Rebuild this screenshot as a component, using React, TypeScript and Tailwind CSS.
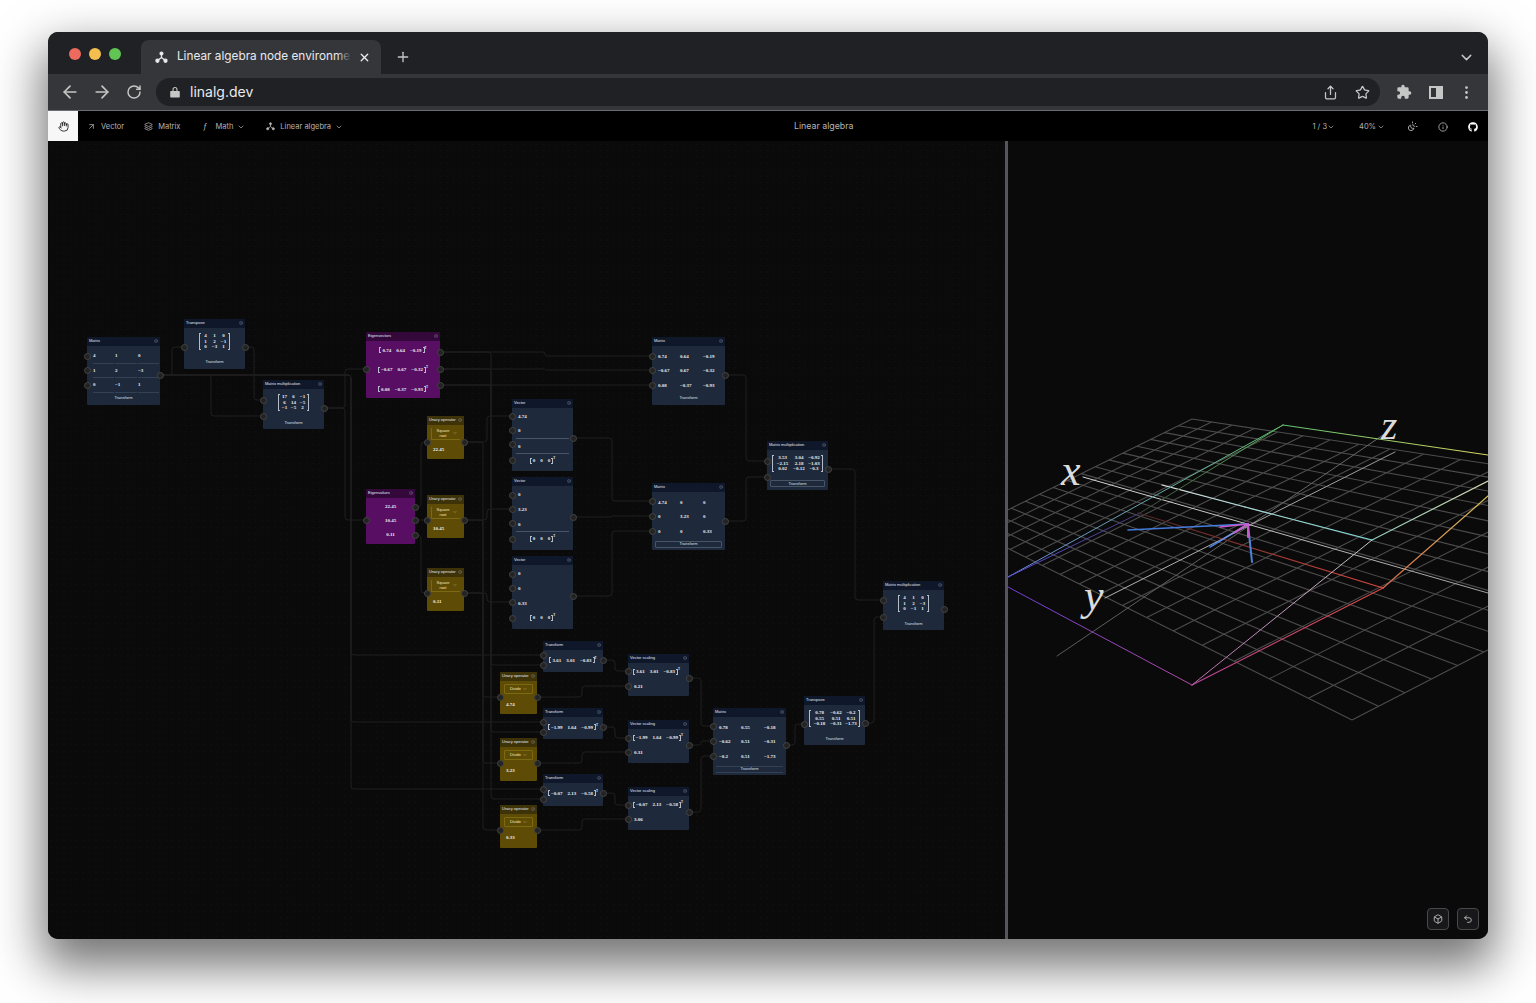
import React from "react";
import {
  ArrowLeft, ArrowRight, ArrowUpRight, Box, ChevronDown, CircleX, EllipsisVertical, Hand, Info, Layers, Plus,
  RotateCw, Share, Star, SunMoon, Undo2, X,
} from "lucide-react";
import { FaGithub } from "react-icons/fa";

/* ---------- small icons ---------- */
function NodesIcon({ size = 12, color = "currentColor" }: { size?: number; color?: string }) {
  return (
    <svg width={size} height={size} viewBox="0 0 16 16" fill="none" stroke={color} strokeWidth="1.5">
      <path d="M8 3v5M8 8l-4.5 3.5M8 8l4.5 3.5" />
      <circle cx="8" cy="3" r="1.8" fill={color} />
      <circle cx="3" cy="12" r="1.9" fill={color} />
      <circle cx="13" cy="12" r="1.9" fill={color} />
    </svg>
  );
}
function PuzzleFilled() {
  return (
    <svg width="16" height="16" viewBox="0 0 24 24" fill="#c4c7c5">
      <path d="M20.5 11H19V7a2 2 0 0 0-2-2h-4V3.5a2.5 2.5 0 0 0-5 0V5H4a2 2 0 0 0-2 2v3.8h1.5a2.7 2.7 0 0 1 0 5.4H2V20a2 2 0 0 0 2 2h3.8v-1.5a2.7 2.7 0 0 1 5.4 0V22H17a2 2 0 0 0 2-2v-4h1.5a2.5 2.5 0 0 0 0-5z" />
    </svg>
  );
}

/* ---------- graph nodes ---------- */
type Port = [number, "l" | "r"];
const TONES = {
  slate: { body: "bg-[#1e293b]", head: "bg-[#0f172a]" },
  purple: { body: "bg-[#570e63]", head: "bg-[#35083c]" },
  yellow: { body: "bg-[#5e4b05]", head: "bg-[#3d3208]" },
};
function GraphNode(p: {
  x: number; y: number; w: number; h: number; title: string; tone?: keyof typeof TONES; ports: Port[]; children: React.ReactNode;
}) {
  const tone = TONES[p.tone ?? "slate"];
  return (
    <div className={`absolute rounded-[1px] ${tone.body}`} style={{ left: p.x - 48, top: p.y - 141, width: p.w, height: p.h }}>
      <div className={`flex h-[8.5px] items-center justify-between whitespace-nowrap px-[2px] font-['Liberation_Sans',sans-serif] text-[4px] leading-none text-[#e2e8f0] ${tone.head}`}>
        <span>{p.title}</span>
        <CircleX size={4} strokeWidth={2} className="shrink-0 text-[#7c8798]" />
      </div>
      {p.children}
      {p.ports.map(([py, side], i) => (
        <span
          key={i}
          className={`absolute h-[7px] w-[7px] rounded-full border border-[#444444] bg-[#232323] ${side === "l" ? "left-[-3.5px]" : "right-[-3.5px]"}`}
          style={{ top: py - p.y - 3.5 }}
        />
      ))}
    </div>
  );
}
const serif = "font-['Liberation_Serif',serif] text-[5px] font-bold leading-none text-[#e8edf3]";

function Transform({ border = false, double = false }: { border?: boolean; double?: boolean }) {
  return (
    <div
      className={`mx-[3px] flex h-[7px] items-center justify-center font-['Liberation_Sans',sans-serif] text-[4px] leading-none text-[#dbe2ea] ${border ? "rounded-[1px] border border-[#475569]" : ""} ${double ? "border-y border-[#334155]" : ""}`}
    >
      Transform
    </div>
  );
}
function MatrixNodeBody({ rows, cells = false, border = false, double = false }: { rows: string[][]; cells?: boolean; border?: boolean; double?: boolean }) {
  return (
    <div className="pt-[3.5px]">
      {rows.map((r, i) => (
        <div key={i} className={`grid h-[14.6px] grid-cols-[22px_23px_1fr] items-center pl-[6px] ${serif}`}>
          {r.map((c, j) => (
            <span key={j} className={`flex h-full items-center ${cells ? "mr-[1px] border-b border-[#334155]" : ""}`}>{c}</span>
          ))}
        </div>
      ))}
      <div className="mt-[2px]"><Transform border={border} double={double} /></div>
    </div>
  );
}
function Bracket({ side, h }: { side: "l" | "r"; h: string }) {
  return <span className={`w-[2px] shrink-0 border-y border-[#b4bcc7] ${h} ${side === "l" ? "border-l" : "border-r"}`} />;
}
function MiniMatrix({ rows, wide = false }: { rows: string[][]; wide?: boolean }) {
  return (
    <div className="flex items-center justify-center">
      <Bracket side="l" h="h-[17px]" />
      <div className={`grid ${wide ? "w-[47px] grid-cols-[17px_16px_14px]" : "w-[27px] grid-cols-3"} ${serif} text-center`}>
        {rows.flat().map((c, i) => (
          <span key={i} className="flex h-[5.6px] items-center justify-center">{c}</span>
        ))}
      </div>
      <Bracket side="r" h="h-[17px]" />
    </div>
  );
}
function Vec({ v }: { v: string[] }) {
  return (
    <div className={`flex items-center ${serif}`}>
      <Bracket side="l" h="h-[6px]" />
      <div className="flex gap-[5px] px-[1px]">{v.map((s, i) => <span key={i}>{s}</span>)}</div>
      <Bracket side="r" h="h-[6px]" />
      <span className="mb-[4px] text-[3px]">T</span>
    </div>
  );
}
function MMBody({ rows, border = false, wide = false }: { rows: string[][]; border?: boolean; wide?: boolean }) {
  return (
    <div className="pt-[5px]">
      <MiniMatrix rows={rows} wide={wide} />
      <div className="mt-[8.5px]"><Transform border={border} /></div>
    </div>
  );
}
function VectorBody({ vals, line }: { vals: string[]; line: number[] }) {
  return (
    <div className="pt-[1px]">
      {vals.map((v, i) => (
        <div key={i} className={`mx-[4px] flex h-[15.3px] items-center pl-[2px] ${serif} ${line.includes(i) ? "border-b border-[#475569]" : ""}`}>{v}</div>
      ))}
      <div className="flex h-[13px] items-center justify-center"><Vec v={["0", "0", "0"]} /></div>
    </div>
  );
}
function UnarySqrt({ v }: { v: string }) {
  return (
    <div>
      <div className="mx-[4px] mt-[3px] flex h-[12px] items-center border-b border-l border-[#7c6a12] font-['Liberation_Sans',sans-serif] text-[4px] leading-[5px] text-[#efe6b8]">
        <span className="ml-[2px] w-[18px] text-center">Square root</span>
        <ChevronDown size={4} className="ml-[1px]" />
      </div>
      <div className={`mt-[7px] pl-[6px] ${serif}`}>{v}</div>
    </div>
  );
}
function UnaryDivide({ v }: { v: string }) {
  return (
    <div>
      <div className="mx-[4px] mt-[3px] flex h-[10px] items-center justify-center gap-[2px] rounded-[1px] border border-[#7c6a12] font-['Liberation_Sans',sans-serif] text-[4px] text-[#efe6b8]">
        Divide <ChevronDown size={4} />
      </div>
      <div className={`mt-[8px] pl-[6px] ${serif}`}>{v}</div>
    </div>
  );
}
function TransformBody({ v }: { v: string[] }) {
  return <div className="flex h-[21px] items-center justify-center"><Vec v={v} /></div>;
}
function ScalingBody({ v, s }: { v: string[]; s: string }) {
  return (
    <div className="pl-[5px]">
      <div className="flex h-[18px] items-center"><Vec v={v} /></div>
      <div className={`mt-[3px] pl-[1px] ${serif}`}>{s}</div>
    </div>
  );
}
function Stack({ vals }: { vals: string[] }) {
  return (
    <div className="pt-[2px]">
      {vals.map((v, i) => (
        <div key={i} className={`flex h-[14.2px] items-center justify-center ${serif}`}>{v}</div>
      ))}
    </div>
  );
}

/* ---------- edges ---------- */
function step(x1: number, y1: number, mx: number, x2: number, y2: number, r = 3) {
  if (y1 === y2) return `M${x1} ${y1}H${x2}`;
  const d = y2 > y1 ? 1 : -1;
  const rr = Math.min(r, Math.abs(y2 - y1) / 2);
  return `M${x1} ${y1}H${mx - rr}Q${mx} ${y1} ${mx} ${y1 + d * rr}V${y2 - d * rr}Q${mx} ${y2} ${mx + rr} ${y2}H${x2}`;
}
const EDGES: string[] = [
  step(160, 375, 172, 184, 347),
  step(160, 375, 211, 263, 416),
  step(245, 347, 254, 263, 400),
  step(324, 408, 345, 366, 369),
  step(324, 408, 345, 366, 520),
  step(160, 375, 351, 543, 655),
  step(160, 375, 351, 543, 722),
  step(160, 375, 351, 543, 789),
  step(440, 352, 545, 652, 356),
  step(440, 369, 545, 652, 370),
  step(440, 385, 545, 652, 385),
  step(440, 352, 491, 543, 665),
  step(440, 369, 491, 543, 732),
  step(440, 385, 491, 543, 799),
  step(464, 442, 487, 512, 416),
  step(464, 442, 483, 500, 697),
  step(464, 520, 483, 500, 763),
  step(464, 593, 483, 500, 830),
  step(415, 507, 421, 427, 442),
  step(415, 520, 421, 427, 520),
  step(415, 535, 421, 427, 593),
  step(464, 520, 487, 512, 509),
  step(464, 593, 487, 512, 602),
  step(573, 438, 612, 652, 501),
  step(573, 517, 612, 652, 516),
  step(573, 596, 612, 652, 531),
  step(725, 375, 746, 767, 461),
  step(725, 521, 746, 767, 477),
  step(828, 469, 855, 883, 600),
  step(865, 723, 874, 883, 617),
  step(603, 660, 615, 628, 671),
  step(603, 727, 615, 628, 738),
  step(603, 793, 615, 628, 805),
  step(537, 697, 582, 628, 686),
  step(537, 763, 582, 628, 752),
  step(537, 830, 582, 628, 819),
  step(689, 678, 701, 713, 726),
  step(689, 745, 701, 713, 741),
  step(689, 812, 701, 713, 756),
  step(786, 745, 795, 804, 724),
];

/* ---------- 3D view ---------- */
type Pt = [number, number];
function homography(p00: Pt, p10: Pt, p11: Pt, p01: Pt) {
  const dx1 = p10[0] - p11[0], dx2 = p01[0] - p11[0], sx = p00[0] - p10[0] + p11[0] - p01[0];
  const dy1 = p10[1] - p11[1], dy2 = p01[1] - p11[1], sy = p00[1] - p10[1] + p11[1] - p01[1];
  const det = dx1 * dy2 - dx2 * dy1;
  const g = (sx * dy2 - dx2 * sy) / det, h = (dx1 * sy - sx * dy1) / det;
  const a = p10[0] - p00[0] + g * p10[0], b = p01[0] - p00[0] + h * p01[0], c = p00[0];
  const d = p10[1] - p00[1] + g * p10[1], e = p01[1] - p00[1] + h * p01[1], f = p00[1];
  return (u: number, v: number): Pt => {
    const w = g * u + h * v + 1;
    return [(a * u + b * v + c) / w, (d * u + e * v + f) / w];
  };
}
const H = homography([1192, 419], [1767, 506], [1352, 720], [969, 529]);
const N = 16;
const gridPath = (() => {
  let s = "";
  for (let i = 0; i <= N; i++) {
    const a = H(i / N, 0), b = H(i / N, 1), c = H(0, i / N), d = H(1, i / N);
    s += `M${a[0].toFixed(1)} ${a[1].toFixed(1)}L${b[0].toFixed(1)} ${b[1].toFixed(1)}`;
    s += `M${c[0].toFixed(1)} ${c[1].toFixed(1)}L${d[0].toFixed(1)} ${d[1].toFixed(1)}`;
  }
  return s;
})();
type Seg = [number, number, number, number, string, string, number?];
const SEGS: Seg[] = [
  [1057, 656, 1383, 435, "#5a5a5a", "#6a6a6a", 1],
  [1083, 477, 1488, 593, "#d8d8d8", "#a0a0a0", 1],
  [1105, 598, 1395, 452, "#b5b5b5", "#9a9a9a", 1],
  [1008, 587, 1192, 685, "#6d3fd0", "#b04aa8", 1],
  [1192, 685, 1383, 588, "#b8459a", "#d9483f", 1.2],
  [1383, 588, 1488, 496, "#d9684a", "#d9c25a", 1.2],
  [1383, 588, 1138, 513, "#d9483f", "#4a2424", 1.2],
  [1192, 685, 1372, 540, "#b86ab0", "#c8c8c8", 1],
  [1372, 540, 1488, 481, "#8fc9b8", "#d4d8b0", 1.2],
  [1372, 540, 1245, 507, "#7fe0dc", "#a8d8d8", 1.2],
  [1245, 507, 1162, 485, "#a8d8d8", "#e8e8e8", 1.2],
  [1008, 577, 1283, 425, "#6a8ae0", "#5fc070", 1],
  [1008, 577, 1140, 513, "#5a50e0", "#43397a", 1],
  [1140, 513, 1283, 425, "#3a4a3a", "#5fb060", 1],
  [1283, 425, 1488, 455, "#5fc070", "#d8d860", 1.2],
  [1248, 524, 1128, 530, "#4a80e0", "#3f78d8", 1.6],
  [1248, 524, 1210, 547, "#a8a8e8", "#3f78d8", 1.6],
  [1248, 524, 1252, 562, "#5a8ae0", "#4a82d8", 2],
  [1248, 524, 1220, 527, "#c85ad0", "#c85ad0", 1.6],
  [1248, 524, 1234, 533, "#c85ad0", "#c85ad0", 1.6],
  [1248, 524, 1248, 537, "#c85ad0", "#c85ad0", 2],
];
function Scene() {
  return (
    <svg className="absolute inset-0 h-full w-full" viewBox="1008 141 480 798">
      <defs>
        {SEGS.map((s, i) => (
          <linearGradient key={i} id={`g${i}`} gradientUnits="userSpaceOnUse" x1={s[0]} y1={s[1]} x2={s[2]} y2={s[3] + 0.01}>
            <stop offset="0" stopColor={s[4]} />
            <stop offset="1" stopColor={s[5]} />
          </linearGradient>
        ))}
      </defs>
      <path d={gridPath} stroke="#4c4c4c" strokeWidth="1.1" fill="none" />
      {SEGS.map((s, i) => (
        <line key={i} x1={s[0]} y1={s[1]} x2={s[2]} y2={s[3] + 0.01} stroke={`url(#g${i})`} strokeWidth={s[6] ?? 1} strokeLinecap="round" />
      ))}
      <text x="1061" y="485" className="fill-[#dcdcdc] font-['Liberation_Serif',serif] text-[44px] italic">x</text>
      <text x="1084" y="610" className="fill-[#dcdcdc] font-['Liberation_Serif',serif] text-[44px] italic">y</text>
      <text x="1381" y="439" className="fill-[#dcdcdc] font-['Liberation_Serif',serif] text-[42px] italic">z</text>
    </svg>
  );
}

/* ---------- chrome ---------- */
function ToolItem({ icon, label, chevron }: { icon: React.ReactNode; label: string; chevron?: boolean }) {
  return (
    <div className="flex items-center gap-[5px] text-[7.5px] text-[#b4b4b4]">
      {icon}
      <span>{label}</span>
      {chevron && <ChevronDown size={8} className="-ml-[1px]" />}
    </div>
  );
}

export default function App() {
  const A = [["4", "1", "0"], ["1", "2", "−3"], ["0", "−1", "1"]];
  const v1 = ["3.61", "3.01", "−0.83"], v2 = ["−1.99", "1.64", "−0.99"], v3 = ["−0.07", "2.13", "−0.58"];
  return (
    <div className="h-[1003px] w-[1536px] overflow-hidden bg-white pl-[48px] pt-[32px] font-['Inter',sans-serif]">
      <div className="flex h-[907px] w-[1440px] flex-col overflow-hidden rounded-[10px] bg-[#0a0a0a] shadow-[0_22px_48px_6px_rgba(0,0,0,0.55)]">
        {/* title bar */}
        <div className="flex h-[42px] shrink-0 bg-[#202124]">
          <div className="flex items-center gap-[8px] pl-[21px] pr-[20px] pt-[2px]">
            <span className="h-[12px] w-[12px] rounded-full bg-[#ed6a5e]" />
            <span className="h-[12px] w-[12px] rounded-full bg-[#f4bf4f]" />
            <span className="h-[12px] w-[12px] rounded-full bg-[#61c554]" />
          </div>
          <div className="mt-[8px] flex h-[34px] w-[240px] items-center rounded-t-[8px] bg-[#35363a] pl-[14px] pr-[10px] text-[#e8eaed]">
            <NodesIcon size={13} color="#e8eaed" />
            <div className="relative ml-[9px] w-[175px] overflow-hidden whitespace-nowrap text-[11.8px]">
              Linear algebra node environment
              <span className="absolute inset-y-0 right-0 w-[14px] bg-gradient-to-r from-transparent to-[#35363a]" />
            </div>
            <X size={13} strokeWidth={2.5} className="ml-[7px]" />
          </div>
          <Plus size={16} className="ml-[14px] mt-[17px] text-[#c4c7c5]" />
          <div className="flex-1" />
          <ChevronDown size={17} className="mr-[13px] mt-[17px] text-[#c4c7c5]" />
        </div>
        {/* address toolbar */}
        <div className="flex h-[36px] shrink-0 items-center bg-[#35363a] text-[#c4c7c5]">
          <div className="flex w-[108px] items-center gap-[12px] pl-[12px]">
            <ArrowLeft size={20} />
            <ArrowRight size={20} />
            <RotateCw size={16} strokeWidth={2.2} className="ml-[2px]" />
          </div>
          <div className="flex h-[28px] w-[1224px] items-center rounded-full bg-[#202124] pl-[14px] pr-[10px]">
            <svg width="10" height="12" viewBox="0 0 10 12" fill="#c4c7c5">
              <path d="M1 5h8a.8.8 0 0 1 .8.8v5a.8.8 0 0 1-.8.8H1a.8.8 0 0 1-.8-.8v-5A.8.8 0 0 1 1 5zM2.5 5V3.4a2.5 2.5 0 0 1 5 0V5H6.4V3.4a1.4 1.4 0 0 0-2.8 0V5z" />
            </svg>
            <span className="ml-[10px] pb-[1px] text-[14px] text-[#e8eaed]">linalg.dev</span>
            <div className="flex-1" />
            <Share size={15} />
            <Star size={15} className="ml-[17px]" />
          </div>
          <div className="ml-[16px] flex items-center">
            <PuzzleFilled />
            <div className="ml-[17px] flex h-[13px] w-[14px] justify-end border-2 border-[#c4c7c5]"><span className="h-full w-[5px] bg-[#c4c7c5]" /></div>
            <EllipsisVertical size={17} className="ml-[15px]" />
          </div>
        </div>
        <div className="h-px shrink-0 bg-[#6b6c70]" />
        {/* app toolbar */}
        <div className="relative flex h-[30px] shrink-0 items-center bg-black">
          <div className="flex h-full w-[30px] items-center justify-center bg-[#f7f7f7]"><Hand size={11} className="text-[#222]" /></div>
          <div className="ml-[9px] flex items-center pt-[1px]">
            <ToolItem icon={<ArrowUpRight size={9} />} label="Vector" />
            <div className="ml-[20px]"><ToolItem icon={<Layers size={9} />} label="Matrix" /></div>
            <div className="ml-[23px]"><ToolItem icon={<span className="w-[7px] italic">ƒ</span>} label="Math" chevron /></div>
            <div className="ml-[21px]"><ToolItem icon={<NodesIcon size={9} />} label="Linear algebra" chevron /></div>
          </div>
          <span className="absolute left-[746px] text-[8.8px] text-[#b4b4b4]">Linear algebra</span>
          <div className="flex-1" />
          <div className="flex items-center pt-[1px] text-[7.5px] text-[#b4b4b4]">
            <span>1 / 3</span><ChevronDown size={8} />
            <span className="ml-[24px]">40%</span><ChevronDown size={8} className="ml-[1px]" />
            <SunMoon size={11} className="ml-[22px]" />
            <Info size={10} className="ml-[20px]" />
            <FaGithub size={10} className="ml-[20px] mr-[10px] text-white" />
          </div>
        </div>
        {/* workspace */}
        <div className="flex min-h-0 flex-1">
          <div className="relative w-[957px] bg-[#0a0a0a] bg-[radial-gradient(#161616_0.6px,transparent_0.7px)] bg-[size:6.4px_6.4px]">
            <svg className="absolute inset-0 h-full w-full" viewBox="48 141 957 798">
              <path d={EDGES.join("")} stroke="#1f1f1f" strokeWidth="1" fill="none" />
            </svg>

            <GraphNode x={87} y={337} w={73} h={68} title="Matrix" ports={[[356, "l"], [370, "l"], [385, "l"], [375, "r"]]}>
              <MatrixNodeBody rows={A} cells />
            </GraphNode>
            <GraphNode x={184} y={319} w={61} h={50} title="Transpose" ports={[[347, "l"], [347, "r"]]}>
              <MMBody rows={[["4", "1", "0"], ["1", "2", "−1"], ["0", "−3", "1"]]} />
            </GraphNode>
            <GraphNode x={263} y={380} w={61} h={49} title="Matrix multiplication" ports={[[400, "l"], [416, "l"], [408, "r"]]}>
              <MMBody rows={[["17", "6", "−1"], ["6", "14", "−5"], ["−1", "−5", "2"]]} />
            </GraphNode>
            <GraphNode x={366} y={332} w={74} h={66} title="Eigenvectors" tone="purple" ports={[[369, "l"], [352, "r"], [369, "r"], [385, "r"]]}>
              {[["0.74", "0.64", "−0.19"], ["−0.67", "0.67", "−0.32"], ["0.08", "−0.37", "−0.93"]].map((v, i) => (
                <div key={i} className="flex h-[19.5px] items-center justify-center"><Vec v={v} /></div>
              ))}
            </GraphNode>
            <GraphNode x={366} y={489} w={49} h={55} title="Eigenvalues" tone="purple" ports={[[520, "l"], [507, "r"], [520, "r"], [535, "r"]]}>
              <Stack vals={["22.45", "10.45", "0.11"]} />
            </GraphNode>
            <GraphNode x={427} y={416} w={37} h={43} title="Unary operator" tone="yellow" ports={[[442, "l"], [442, "r"]]}><UnarySqrt v="22.45" /></GraphNode>
            <GraphNode x={427} y={495} w={37} h={43} title="Unary operator" tone="yellow" ports={[[520, "l"], [520, "r"]]}><UnarySqrt v="10.45" /></GraphNode>
            <GraphNode x={427} y={568} w={37} h={43} title="Unary operator" tone="yellow" ports={[[593, "l"], [593, "r"]]}><UnarySqrt v="0.11" /></GraphNode>

            <GraphNode x={512} y={399} w={61} h={72} title="Vector" ports={[[416, "l"], [430, "l"], [444, "l"], [460, "l"], [438, "r"]]}>
              <VectorBody vals={["4.74", "0", "0"]} line={[1, 2]} />
            </GraphNode>
            <GraphNode x={512} y={477} w={61} h={73} title="Vector" ports={[[495, "l"], [509, "l"], [523, "l"], [539, "l"], [517, "r"]]}>
              <VectorBody vals={["0", "3.23", "0"]} line={[2]} />
            </GraphNode>
            <GraphNode x={512} y={556} w={61} h={73} title="Vector" ports={[[574, "l"], [588, "l"], [602, "l"], [618, "l"], [596, "r"]]}>
              <VectorBody vals={["0", "0", "0.33"]} line={[]} />
            </GraphNode>

            <GraphNode x={652} y={337} w={73} h={68} title="Matrix" ports={[[356, "l"], [370, "l"], [385, "l"], [375, "r"]]}>
              <MatrixNodeBody rows={[["0.74", "0.64", "−0.19"], ["−0.67", "0.67", "−0.32"], ["0.08", "−0.37", "−0.93"]]} />
            </GraphNode>
            <GraphNode x={652} y={483} w={73} h={67} title="Matrix" ports={[[501, "l"], [516, "l"], [531, "l"], [521, "r"]]}>
              <MatrixNodeBody rows={[["4.74", "0", "0"], ["0", "3.23", "0"], ["0", "0", "0.33"]]} border />
            </GraphNode>
            <GraphNode x={767} y={441} w={61} h={49} title="Matrix multiplication" ports={[[461, "l"], [477, "l"], [469, "r"]]}>
              <MMBody wide border rows={[["3.53", "3.04", "−0.92"], ["−2.15", "2.18", "−1.03"], ["0.02", "−0.12", "−0.3"]]} />
            </GraphNode>
            <GraphNode x={883} y={581} w={61} h={49} title="Matrix multiplication" ports={[[600, "l"], [617, "l"], [609, "r"]]}>
              <MMBody rows={A} />
            </GraphNode>

            <GraphNode x={543} y={641} w={60} h={31} title="Transform" ports={[[655, "l"], [665, "l"], [660, "r"]]}><TransformBody v={v1} /></GraphNode>
            <GraphNode x={543} y={708} w={60} h={31} title="Transform" ports={[[722, "l"], [732, "l"], [727, "r"]]}><TransformBody v={v2} /></GraphNode>
            <GraphNode x={543} y={774} w={60} h={32} title="Transform" ports={[[789, "l"], [799, "l"], [793, "r"]]}><TransformBody v={v3} /></GraphNode>

            <GraphNode x={500} y={672} w={37} h={42} title="Unary operator" tone="yellow" ports={[[697, "l"], [697, "r"]]}><UnaryDivide v="4.74" /></GraphNode>
            <GraphNode x={500} y={738} w={37} h={43} title="Unary operator" tone="yellow" ports={[[763, "l"], [763, "r"]]}><UnaryDivide v="3.23" /></GraphNode>
            <GraphNode x={500} y={805} w={37} h={43} title="Unary operator" tone="yellow" ports={[[830, "l"], [830, "r"]]}><UnaryDivide v="0.33" /></GraphNode>

            <GraphNode x={628} y={654} w={61} h={42} title="Vector scaling" ports={[[671, "l"], [686, "l"], [678, "r"]]}><ScalingBody v={v1} s="0.21" /></GraphNode>
            <GraphNode x={628} y={720} w={61} h={43} title="Vector scaling" ports={[[738, "l"], [752, "l"], [745, "r"]]}><ScalingBody v={v2} s="0.31" /></GraphNode>
            <GraphNode x={628} y={787} w={61} h={43} title="Vector scaling" ports={[[805, "l"], [819, "l"], [812, "r"]]}><ScalingBody v={v3} s="3.06" /></GraphNode>

            <GraphNode x={713} y={708} w={73} h={67} title="Matrix" ports={[[726, "l"], [741, "l"], [756, "l"], [745, "r"]]}>
              <MatrixNodeBody double rows={[["0.78", "0.55", "−0.18"], ["−0.62", "0.51", "−0.31"], ["−0.2", "0.51", "−1.73"]]} />
            </GraphNode>
            <GraphNode x={804} y={696} w={61} h={49} title="Transpose" ports={[[724, "l"], [723, "r"]]}>
              <MMBody wide rows={[["0.78", "−0.62", "−0.2"], ["0.55", "0.51", "0.51"], ["−0.18", "−0.31", "−1.73"]]} />
            </GraphNode>
          </div>
          <div className="w-[3px] shrink-0 bg-[#55565b]" />
          <div className="relative min-w-0 flex-1 overflow-hidden bg-[#0a0a0a]">
            <Scene />
            <div className="absolute bottom-[9px] right-[9px] flex gap-[8px]">
              <button className="flex h-[22px] w-[22px] items-center justify-center rounded-[4px] border border-[#48484c] bg-[#18181b] text-[#c8c8c8]"><Box size={10} /></button>
              <button className="flex h-[22px] w-[22px] items-center justify-center rounded-[4px] border border-[#48484c] bg-[#18181b] text-[#c8c8c8]"><Undo2 size={10} /></button>
            </div>
          </div>
        </div>
      </div>
    </div>
  );
}
